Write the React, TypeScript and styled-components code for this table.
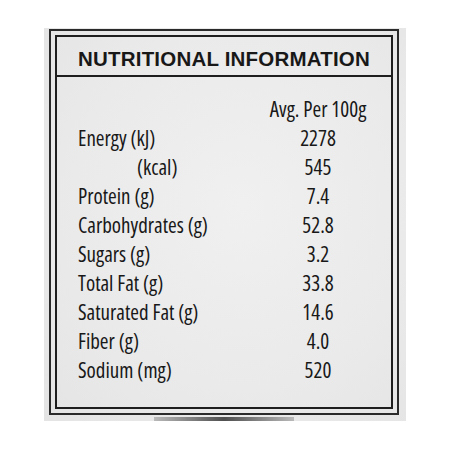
import React from "react";
import styled, { createGlobalStyle } from "styled-components";

const Global = createGlobalStyle`
  html, body { margin: 0; padding: 0; background: #ffffff; }
  body { width: 450px; height: 450px; overflow: hidden; }
`;

const Page = styled.div`
  width: 450px;
  height: 450px;
  padding: 28px 44px 0 44px;
  box-sizing: border-box;
  background: #ffffff;
`;

const Card = styled.div`
  width: 362px;
  height: 393px;
  box-sizing: border-box;
  padding: 1px 7px 0 5px;
  background: radial-gradient(ellipse at 55% 45%, #f0f0f0 0%, #eaeaea 60%, #e4e4e4 100%);
  display: flex;
  flex-direction: column;
`;

const OuterFrame = styled.div`
  border: 2px solid #2a2a2a;
  padding: 4px;
  height: 388px;
  box-sizing: border-box;
  display: flex;
`;

const InnerFrame = styled.div`
  flex: 1;
  border: 2px solid #1e1e1e;
  display: flex;
  flex-direction: column;
  color: #181818;
`;

const Header = styled.div`
  height: 40px;
  box-sizing: border-box;
  padding-top: 3px;
  border-bottom: 2px solid #1e1e1e;
  text-align: center;
  font-family: "Liberation Sans", Arial, sans-serif;
  font-weight: 700;
  font-size: 20.5px;
  line-height: 37px;
  letter-spacing: 0.2px;
`;

const Table = styled.div`
  padding: 18px 23px 0 21px;
  display: grid;
  grid-template-columns: 1fr 100px;
  font-family: "Open Sans", "DejaVu Sans Condensed", sans-serif;
  font-stretch: 79%;
  font-weight: 500;
  font-size: 21px;
  line-height: 29px;
`;

const Label = styled.div<{ $indent?: boolean }>`
  padding-left: ${(p) => (p.$indent ? "59px" : "0")};
  white-space: nowrap;
`;

const Value = styled.div`
  text-align: center;
  white-space: nowrap;
`;

const ShadowStrip = styled.div`
  align-self: center;
  margin: 2px 0 0 0;
  width: 140px;
  height: 4px;
  background: linear-gradient(90deg, rgba(80,80,80,0.3), rgba(40,40,40,0.8) 50%, rgba(80,80,80,0.3));
  filter: blur(0.6px);
`;

const rows: { label: string; value: string; indent?: boolean }[] = [
  { label: "Energy (kJ)", value: "2278" },
  { label: "(kcal)", value: "545", indent: true },
  { label: "Protein (g)", value: "7.4" },
  { label: "Carbohydrates (g)", value: "52.8" },
  { label: "Sugars (g)", value: "3.2" },
  { label: "Total Fat (g)", value: "33.8" },
  { label: "Saturated Fat (g)", value: "14.6" },
  { label: "Fiber (g)", value: "4.0" },
  { label: "Sodium (mg)", value: "520" },
];

export default function App() {
  return (
    <>
      <Global />
      <Page>
        <Card>
          <OuterFrame>
            <InnerFrame>
              <Header>NUTRITIONAL INFORMATION</Header>
              <Table>
                <Label />
                <Value>Avg. Per 100g</Value>
                {rows.map((r) => (
                  <React.Fragment key={r.label}>
                    <Label $indent={r.indent}>{r.label}</Label>
                    <Value>{r.value}</Value>
                  </React.Fragment>
                ))}
              </Table>
            </InnerFrame>
          </OuterFrame>
          <ShadowStrip />
        </Card>
      </Page>
    </>
  );
}
